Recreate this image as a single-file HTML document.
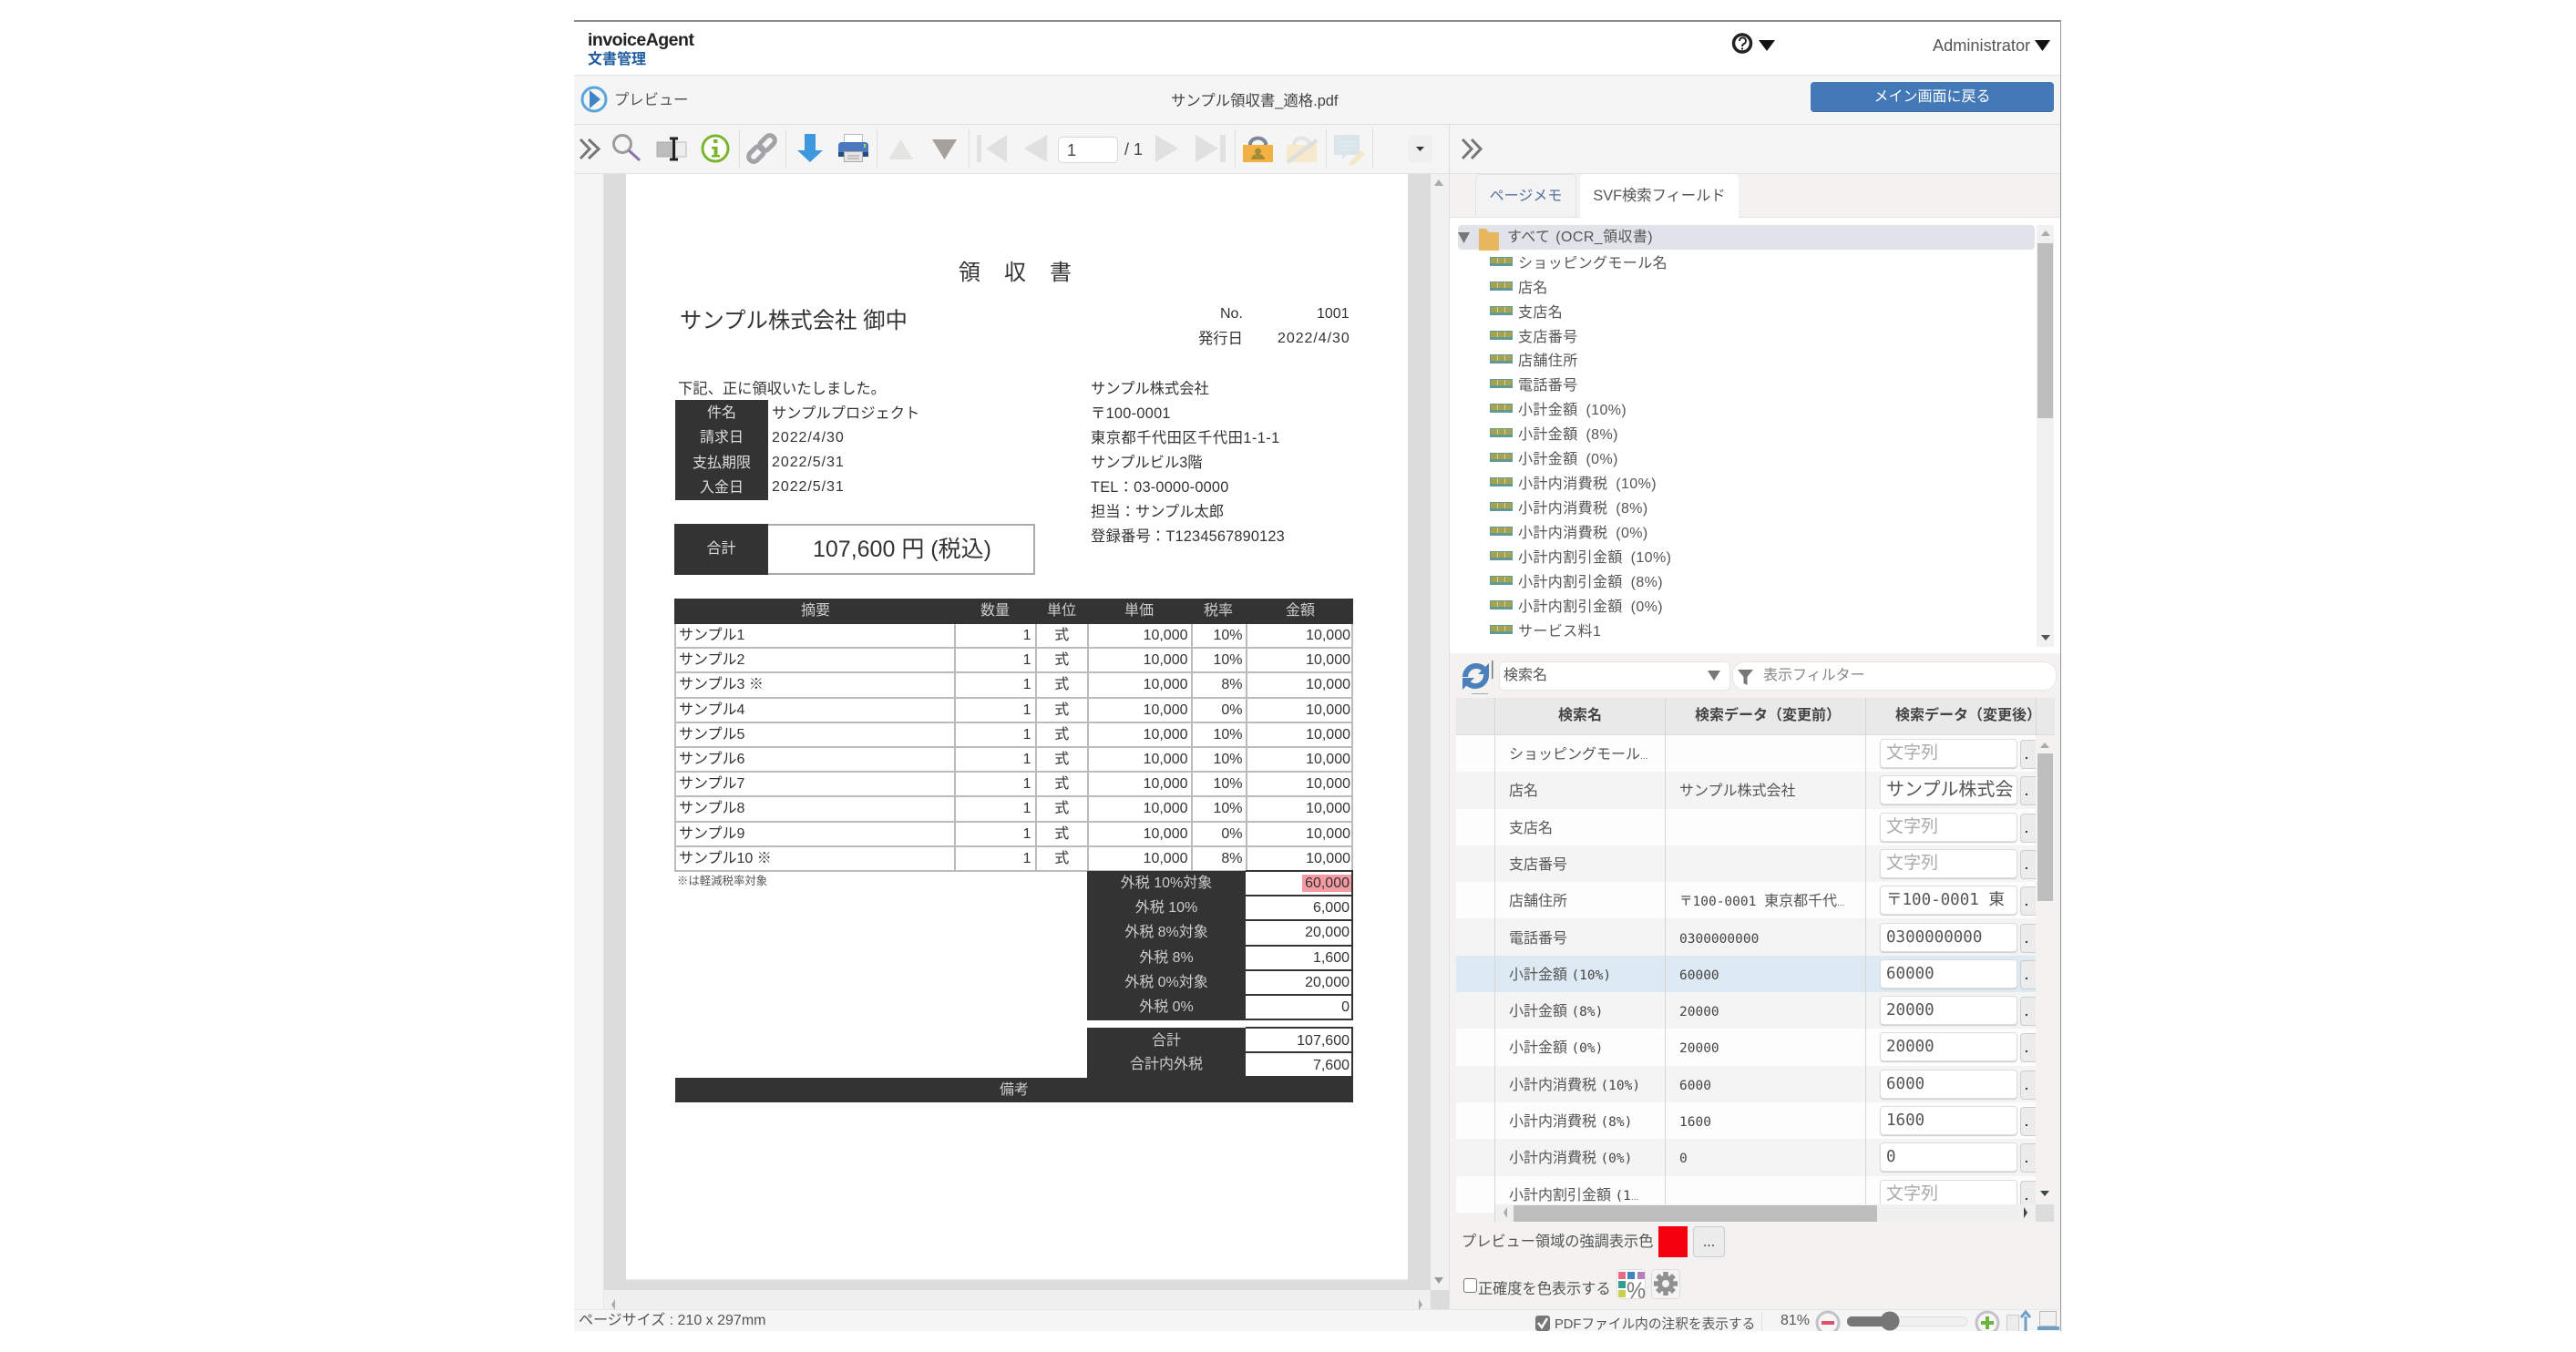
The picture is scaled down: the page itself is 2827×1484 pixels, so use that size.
<!DOCTYPE html>
<html lang="ja"><head><meta charset="utf-8"><title>プレビュー</title>
<style>
html,body{margin:0;padding:0;background:#fff}
body{width:2827px;height:1484px;position:relative;overflow:hidden;font-family:"Liberation Sans","Noto Sans CJK JP",sans-serif;font-size:16px;color:#555}
div,span.t{position:absolute;box-sizing:border-box}
.t{white-space:nowrap;line-height:20px}
.k{color:#333;font-size:16.3px;margin-top:1px}
.d{letter-spacing:.95px}
.r{left:740px;width:745px;height:27.2px;display:flex;border-left:2px solid #bbb;border-right:2px solid #bbb;border-bottom:2px solid #bbb;color:#333;line-height:25px}
.r span{display:block;flex:none;box-sizing:border-box;height:100%;border-right:2px solid #bbb;white-space:nowrap}
.r span:last-child{border-right:0}
.c1{width:307px;padding-left:3px}.c2{width:88.5px;text-align:right;padding-right:4px}.c3{width:57.5px;text-align:center}.c4{width:113.5px;text-align:right;padding-right:3px}.c5{width:60px;text-align:right;padding-right:3px}.c6{width:114.5px;text-align:right;padding-right:1px}
.hd{top:657px;height:27px;line-height:27px;color:#ccc;text-align:center;transform:translateX(-50%);white-space:nowrap}
.lb{color:#ccc;text-align:center;left:1193px;width:174px;height:27px;line-height:27px;white-space:nowrap}
.vl{left:1367px;width:118px;height:27.2px;background:#fff;border-bottom:2px solid #333;border-right:2px solid #333;text-align:right;padding-right:2px;line-height:25px;color:#333}
.dk{background:#333}
.wl{color:#ddd;text-align:center;left:741px;width:102px;height:27px;line-height:27px;margin-top:1px}
.tr{left:1634px;height:27px;line-height:27px;white-space:nowrap;padding-left:32px;color:#555;letter-spacing:.4px;word-spacing:4px}
.tr:before{content:"";position:absolute;left:1px;top:6px;width:25px;height:10px;background:repeating-linear-gradient(90deg,#a7a24f 0 7px,#d5d19a 7px 8px);border:1.5px solid #5f9a96;border-bottom:3px solid #5f9a96;box-sizing:border-box}
.tx{margin-top:2px}
.row{left:0;width:636px;height:40.3px}
.row .n{position:absolute;left:58px;top:2px;line-height:40px;white-space:nowrap}
.row .b{position:absolute;left:245px;top:2px;line-height:40px;white-space:nowrap}
.row i{font:normal 14.5px "DejaVu Sans Mono",monospace;color:#444}
.row .in{position:absolute;left:465px;top:4px;width:151px;height:32px;background:#fff;border:1px solid #ddd;border-radius:4px;box-shadow:0 1px 1px #ccc;font:17.5px/30px "DejaVu Sans Mono","Noto Sans CJK JP",monospace;padding-left:6px;overflow:hidden;white-space:nowrap;color:#555}
.row .ph{font:19px/30px "Liberation Sans","Noto Sans CJK JP",sans-serif;color:#aaa}
.row .jp{font:20px/30px "Liberation Sans","Noto Sans CJK JP",sans-serif}
.row .bt{position:absolute;left:619px;top:5px;width:24px;height:32px;background:#ececec;border:1px solid #ccc;border-radius:4px;font:bold 14px/30px "Liberation Sans",sans-serif;padding-left:4px;color:#333}
.el{font-size:10px}
</style></head><body>

<!-- frame -->
<div style="left:630px;top:22px;width:1632px;height:2px;background:#8a8a8a"></div>
<div style="left:2261px;top:22px;width:1px;height:1439px;background:#999"></div>
<div style="left:630px;top:24px;width:1631px;height:58px;background:#fff"></div>
<div style="left:630px;top:82px;width:1631px;height:55px;background:#f5f5f5;border-top:1px solid #e6e6e6;border-bottom:1px solid #dedede"></div>
<div style="left:630px;top:137px;width:1631px;height:54px;background:#f5f5f5;border-bottom:1px solid #e2e2e2"></div>
<div style="left:630px;top:191px;width:32px;height:1246px;background:#f5f5f5"></div>
<div style="left:662px;top:191px;width:1px;height:1246px;background:#e6e6e6"></div>
<div style="left:663px;top:191px;width:907px;height:1225px;background:#dcdcdc"></div>
<div style="left:687px;top:191px;width:858px;height:1214px;background:#fff;border-bottom:1px solid #eee"></div>
<div style="left:1570px;top:191px;width:20px;height:1225px;background:#f1f1f1"></div>
<div style="left:663px;top:1416px;width:907px;height:21px;background:#f0f0f0"></div>
<div style="left:1570px;top:1416px;width:20px;height:21px;background:#dcdcdc"></div>
<div style="left:630px;top:1437px;width:1631px;height:24px;background:#f5f5f5;border-top:1px solid #e6e6e6"></div>
<div style="left:1590px;top:137px;width:1px;height:1300px;background:#e0e0e0"></div>

<!-- header text -->
<span class="t" style="left:645px;top:34px;font-size:19.500px;font-weight:bold;color:#222;letter-spacing:-.5px">invoiceAgent</span>
<span class="t" style="left:645px;top:56px;font-size:16px;font-weight:bold;color:#1f5c9e">文書管理</span>
<span class="t" style="left:2121px;top:40px;font-size:18.200px">Administrator</span>
<span class="t" style="left:674px;top:100px;font-size:16.300px">プレビュー</span>
<span class="t" style="left:1285px;top:101px;color:#444;font-size:16.400px">サンプル領収書_適格.pdf</span>
<div style="left:1987px;top:90px;width:267px;height:33px;background:#4279b6;border-radius:4px;color:#fff;text-align:center;line-height:34px;border-bottom:1px solid #3a6ca5">メイン画面に戻る</div>
<div style="left:1161px;top:150px;width:66px;height:29px;background:#fff;border:1px solid #d8d8d8;border-radius:5px;line-height:28px;padding-left:9px;color:#444;font-size:18px">1</div>
<span class="t" style="left:1234px;top:154px;color:#444;font-size:18px">/ 1</span>
<div style="left:1545px;top:148px;width:27px;height:31px;background:#f0f0f0;border-radius:4px"></div>

<!-- invoice -->
<span class="t k" style="left:1052px;top:288px;font-size:24px;letter-spacing:26px;line-height:24px;margin-top:0">領収書</span>
<span class="t k" style="left:746px;top:338px;font-size:24.400px;line-height:28px">サンプル株式会社 御中</span>
<span class="t k" style="left:1339px;top:334px;font-size:16px">No.</span>
<span class="t k" style="left:1445px;top:334px;font-size:16px">1001</span>
<span class="t k" style="left:1315px;top:361px">発行日</span>
<span class="t k d" style="left:1402px;top:361px;font-size:16px">2022/4/30</span>
<span class="t k" style="left:744px;top:416px">下記、正に領収いたしました。</span>
<div class="dk" style="left:741px;top:439px;width:102px;height:110px"></div>
<div class="wl" style="top:439px">件名</div><div class="wl" style="top:466px">請求日</div><div class="wl" style="top:494px">支払期限</div><div class="wl" style="top:521px">入金日</div>
<span class="t k" style="left:847px;top:443px">サンプルプロジェクト</span>
<span class="t k d" style="left:847px;top:470px;font-size:16px">2022/4/30</span>
<span class="t k d" style="left:847px;top:497px;font-size:16px">2022/5/31</span>
<span class="t k d" style="left:847px;top:524px;font-size:16px">2022/5/31</span>
<span class="t k" style="left:1197px;top:416px">サンプル株式会社</span>
<span class="t k" style="left:1197px;top:443px;letter-spacing:.3px">〒100-0001</span>
<span class="t k" style="left:1197px;top:470px;letter-spacing:.45px">東京都千代田区千代田1-1-1</span>
<span class="t k" style="left:1197px;top:497px">サンプルビル3階</span>
<span class="t k" style="left:1197px;top:524px;letter-spacing:.25px">TEL：03-0000-0000</span>
<span class="t k" style="left:1197px;top:551px">担当：サンプル太郎</span>
<span class="t k" style="left:1197px;top:578px;letter-spacing:.2px">登録番号：T1234567890123</span>
<div style="left:740px;top:575px;width:396px;height:56px;border:2px solid #aaa;background:#fff"></div>
<div class="dk" style="left:740px;top:575px;width:103px;height:56px;line-height:56px;text-align:center;color:#ddd">合計</div>
<span class="t k" style="left:892px;top:588px;font-size:25px;line-height:30px;margin-top:0">107,600 円 (税込)</span>

<div class="dk" style="left:740px;top:657px;width:745px;height:28px"></div>
<div class="hd" style="left:895px">摘要</div><div class="hd" style="left:1092px">数量</div><div class="hd" style="left:1165px">単位</div><div class="hd" style="left:1250px">単価</div><div class="hd" style="left:1337px">税率</div><div class="hd" style="left:1427px">金額</div>

<div class="r" style="top:685px"><span class="c1">サンプル1</span><span class="c2">1</span><span class="c3">式</span><span class="c4">10,000</span><span class="c5">10%</span><span class="c6">10,000</span></div>
<div class="r" style="top:712.2px"><span class="c1">サンプル2</span><span class="c2">1</span><span class="c3">式</span><span class="c4">10,000</span><span class="c5">10%</span><span class="c6">10,000</span></div>
<div class="r" style="top:739.4px"><span class="c1">サンプル3 ※</span><span class="c2">1</span><span class="c3">式</span><span class="c4">10,000</span><span class="c5">8%</span><span class="c6">10,000</span></div>
<div class="r" style="top:766.6px"><span class="c1">サンプル4</span><span class="c2">1</span><span class="c3">式</span><span class="c4">10,000</span><span class="c5">0%</span><span class="c6">10,000</span></div>
<div class="r" style="top:793.8px"><span class="c1">サンプル5</span><span class="c2">1</span><span class="c3">式</span><span class="c4">10,000</span><span class="c5">10%</span><span class="c6">10,000</span></div>
<div class="r" style="top:821px"><span class="c1">サンプル6</span><span class="c2">1</span><span class="c3">式</span><span class="c4">10,000</span><span class="c5">10%</span><span class="c6">10,000</span></div>
<div class="r" style="top:848.2px"><span class="c1">サンプル7</span><span class="c2">1</span><span class="c3">式</span><span class="c4">10,000</span><span class="c5">10%</span><span class="c6">10,000</span></div>
<div class="r" style="top:875.4px"><span class="c1">サンプル8</span><span class="c2">1</span><span class="c3">式</span><span class="c4">10,000</span><span class="c5">10%</span><span class="c6">10,000</span></div>
<div class="r" style="top:902.6px"><span class="c1">サンプル9</span><span class="c2">1</span><span class="c3">式</span><span class="c4">10,000</span><span class="c5">0%</span><span class="c6">10,000</span></div>
<div class="r" style="top:929.8px"><span class="c1">サンプル10 ※</span><span class="c2">1</span><span class="c3">式</span><span class="c4">10,000</span><span class="c5">8%</span><span class="c6">10,000</span></div>
<span class="t" style="left:743px;top:957px;font-size:12.4px;color:#555">※は軽減税率対象</span>

<div class="dk" style="left:1193px;top:956px;width:174px;height:164px"></div>
<div class="lb" style="top:956px">外税 10%対象</div><div class="lb" style="top:983px">外税 10%</div><div class="lb" style="top:1010px">外税 8%対象</div><div class="lb" style="top:1038px">外税 8%</div><div class="lb" style="top:1065px">外税 0%対象</div><div class="lb" style="top:1092px">外税 0%</div>
<div style="left:1367px;top:955px;width:118px;height:2px;background:#333"></div>
<div style="left:1429px;top:960px;width:55px;height:19px;background:#f59aa3"></div>
<div class="vl" style="top:957px;background:transparent">60,000</div>
<div class="vl" style="top:984.2px">6,000</div><div class="vl" style="top:1011.4px">20,000</div><div class="vl" style="top:1038.6px">1,600</div><div class="vl" style="top:1065.8px">20,000</div><div class="vl" style="top:1093px">0</div>

<div class="dk" style="left:1193px;top:1128px;width:174px;height:56px"></div>
<div class="lb" style="top:1129px">合計</div><div class="lb" style="top:1155px">合計内外税</div>
<div style="left:1367px;top:1127px;width:118px;height:2px;background:#333"></div>
<div class="vl" style="top:1129px;height:27px;line-height:27px">107,600</div><div class="vl" style="top:1156px;height:27px;line-height:27px">7,600</div>
<div class="dk" style="left:741px;top:1183px;width:744px;height:27px;text-align:center;line-height:27px;color:#ccc">備考</div>

<!-- right panel -->
<div style="left:1591px;top:191px;width:670px;height:48px;background:#f3f2f1"></div>
<div style="left:1619px;top:191px;width:111px;height:48px;background:#f3f3f3;border:1px solid #e2e2e2;border-bottom:0;border-radius:5px 5px 0 0;line-height:48px;text-align:center;color:#56709e">ページメモ</div>
<div style="left:1734px;top:191px;width:174px;height:49px;background:#fff;border-radius:5px 5px 0 0;line-height:48px;text-align:center;font-size:16.300px">SVF検索フィールド</div>
<div style="left:1591px;top:239px;width:670px;height:478px;background:#fff"></div>
<div style="left:1591px;top:238px;width:143px;height:1px;background:#e3e3e3"></div>
<div style="left:1908px;top:238px;width:353px;height:1px;background:#e3e3e3"></div>
<div style="left:1600px;top:247px;width:633px;height:27px;background:#e0e4ea;border-radius:4px"></div>
<span class="t" style="left:1654px;top:251px;letter-spacing:.4px;word-spacing:1px">すべて (OCR_領収書)</span>
<div class="tr tx" style="top:274px">ショッピングモール名</div>
<div class="tr tx" style="top:301px">店名</div>
<div class="tr tx" style="top:328px">支店名</div>
<div class="tr tx" style="top:355px">支店番号</div>
<div class="tr tx" style="top:381px">店舗住所</div>
<div class="tr tx" style="top:408px">電話番号</div>
<div class="tr tx" style="top:435px">小計金額 (10%)</div>
<div class="tr tx" style="top:462px">小計金額 (8%)</div>
<div class="tr tx" style="top:489px">小計金額 (0%)</div>
<div class="tr tx" style="top:516px">小計内消費税 (10%)</div>
<div class="tr tx" style="top:543px">小計内消費税 (8%)</div>
<div class="tr tx" style="top:570px">小計内消費税 (0%)</div>
<div class="tr tx" style="top:597px">小計内割引金額 (10%)</div>
<div class="tr tx" style="top:624px">小計内割引金額 (8%)</div>
<div class="tr tx" style="top:651px">小計内割引金額 (0%)</div>
<div class="tr tx" style="top:678px">サービス料1</div>
<div style="left:2235px;top:247px;width:19px;height:463px;background:#f1f1f1"></div>
<div style="left:2236px;top:267px;width:17px;height:192px;background:#bebebe"></div>

<div style="left:1591px;top:717px;width:670px;height:720px;background:#f3f2f1"></div>
<div style="left:1645px;top:726px;width:254px;height:32px;background:#fff;border:1px solid #e6e6e6;border-radius:6px;line-height:29px;padding-left:4px">検索名</div>
<div style="left:1901px;top:726px;width:356px;height:32px;background:#fff;border:1px solid #e6e6e6;border-radius:14px;line-height:29px;padding-left:33px;color:#888">表示フィルター</div>

<div style="left:1598px;top:766px;width:657px;height:41px;background:#e9e9e9;border-bottom:1px solid #ddd"></div>
<span class="t" style="left:1710px;top:776px;font-weight:bold;color:#444">検索名</span>
<span class="t" style="left:1860px;top:776px;font-weight:bold;color:#444;font-size:16px">検索データ（変更前）</span>
<span class="t" style="left:2080px;top:776px;font-weight:bold;color:#444;font-size:16px">検索データ（変更後）</span>

<div style="left:1598px;top:807px;width:636px;height:524px;overflow:hidden">
<div class="row" style="top:0;background:#fdfdfd"><span class="n">ショッピングモール<span class="el">...</span></span><div class="in ph">文字列</div><div class="bt">.</div></div>
<div class="row" style="top:40.3px;background:#f4f4f4"><span class="n">店名</span><span class="b">サンプル株式会社</span><div class="in jp">サンプル株式会</div><div class="bt">.</div></div>
<div class="row" style="top:80.6px;background:#fdfdfd"><span class="n">支店名</span><div class="in ph">文字列</div><div class="bt">.</div></div>
<div class="row" style="top:120.9px;background:#f4f4f4"><span class="n">支店番号</span><div class="in ph">文字列</div><div class="bt">.</div></div>
<div class="row" style="top:161.2px;background:#fdfdfd"><span class="n">店舗住所</span><span class="b"><i>〒100-0001 </i>東京都千代<span class="el">...</span></span><div class="in">〒100-0001 東</div><div class="bt">.</div></div>
<div class="row" style="top:201.5px;background:#f4f4f4"><span class="n">電話番号</span><span class="b"><i>0300000000</i></span><div class="in">0300000000</div><div class="bt">.</div></div>
<div class="row" style="top:241.8px;background:#deeaf3"><span class="n">小計金額 <i>(10%)</i></span><span class="b"><i>60000</i></span><div class="in">60000</div><div class="bt">.</div></div>
<div class="row" style="top:282.1px;background:#f4f4f4"><span class="n">小計金額 <i>(8%)</i></span><span class="b"><i>20000</i></span><div class="in">20000</div><div class="bt">.</div></div>
<div class="row" style="top:322.4px;background:#fdfdfd"><span class="n">小計金額 <i>(0%)</i></span><span class="b"><i>20000</i></span><div class="in">20000</div><div class="bt">.</div></div>
<div class="row" style="top:362.7px;background:#f4f4f4"><span class="n">小計内消費税 <i>(10%)</i></span><span class="b"><i>6000</i></span><div class="in">6000</div><div class="bt">.</div></div>
<div class="row" style="top:403px;background:#fdfdfd"><span class="n">小計内消費税 <i>(8%)</i></span><span class="b"><i>1600</i></span><div class="in">1600</div><div class="bt">.</div></div>
<div class="row" style="top:443.3px;background:#f4f4f4"><span class="n">小計内消費税 <i>(0%)</i></span><span class="b"><i>0</i></span><div class="in">0</div><div class="bt">.</div></div>
<div class="row" style="top:483.6px;background:#fdfdfd"><span class="n">小計内割引金額 <i>(1</i><span class="el">...</span></span><div class="in ph">文字列</div><div class="bt">.</div></div>
</div>
<div style="left:1640px;top:766px;width:1px;height:575px;background:#d6d6d6"></div>
<div style="left:1827px;top:766px;width:1px;height:556px;background:#d6d6d6"></div>
<div style="left:2047px;top:766px;width:1px;height:556px;background:#d6d6d6"></div>
<div style="left:2234px;top:766px;width:1px;height:41px;background:#d6d6d6"></div>
<div style="left:2236px;top:827px;width:17px;height:162px;background:#bebebe"></div>
<div style="left:1641px;top:1322px;width:593px;height:19px;background:#f0f0f0"></div>
<div style="left:1661px;top:1323px;width:399px;height:18px;background:#bebebe"></div>
<div style="left:2234px;top:1322px;width:20px;height:19px;background:#dcdcdc"></div>

<span class="t" style="left:1604px;top:1353px;font-size:16.200px">プレビュー領域の強調表示色</span>
<div style="left:1820px;top:1346px;width:32px;height:34px;background:#f5000f"></div>
<div style="left:1858px;top:1346px;width:35px;height:34px;background:#ececec;border:1px solid #ccc;border-radius:4px;text-align:center;line-height:34px;color:#333">...</div>
<div style="left:1606px;top:1403px;width:15px;height:16px;background:#fff;border:1.5px solid #777;border-radius:3px"></div>
<span class="t" style="left:1622px;top:1405px;font-size:16.200px">正確度を色表示する</span>
<span class="t" style="left:635px;top:1440px;color:#555">ページサイズ : 210 x 297mm</span>
<span class="t" style="left:1706px;top:1444px;font-size:14.700px">PDFファイル内の注釈を表示する</span>
<span class="t" style="left:1954px;top:1440px;font-size:16px">81%</span>
<div style="left:1933px;top:1441px;width:1px;height:20px;background:#e0e0e0"></div>

<!-- icons -->
<svg width="2827" height="1484" viewBox="0 0 2827 1484" style="position:absolute;left:0;top:0">
<!-- help + carets -->
<circle cx="1912" cy="47.500" r="9.500" fill="#fff" stroke="#222" stroke-width="3.500"/>
<path d="M1909 45a3.500 3.500 0 1 1 5 3q-2 1-2 3M1912 52.500v2" fill="none" stroke="#222" stroke-width="2"/>
<path d="M1930 44h18l-9 12zM2233 44h17l-8.500 12z" fill="#111"/>
<!-- preview play -->
<circle cx="652" cy="109" r="13" fill="#f5f5f5" stroke="#5aa5dc" stroke-width="3"/>
<path d="M647 99l12 10-12 10z" fill="#3e84c6"/>
<!-- expand -->
<path d="M637 153l10 10.500-10 10.500M646 153l11 10.500-11 10.500" fill="none" stroke="#777" stroke-width="3"/>
<path d="M1605 153l10 10.500-10 10.500M1615 153l10 10.500-10 10.500" fill="none" stroke="#777" stroke-width="3"/>
<!-- magnifier -->
<circle cx="683" cy="158" r="9.500" fill="none" stroke="#9b9b9b" stroke-width="3"/>
<path d="M690 165l12 11" stroke="#8b72a8" stroke-width="3"/>
<!-- fit text -->
<rect x="721" y="156" width="16" height="16" fill="#bcbcbc" stroke="#aaa"/>
<rect x="741" y="156" width="12" height="16" fill="#eee" stroke="#bbb"/>
<path d="M735 152h9M739.500 152v23M735 175h9" stroke="#222" stroke-width="3" fill="none"/>
<!-- info -->
<circle cx="785" cy="163" r="14" fill="#fff" stroke="#7ab52e" stroke-width="3"/>
<rect x="783" y="153" width="4.500" height="4" fill="#7ab52e"/><path d="M781 161h6.500v9h2.500v2.500h-9V170h2.500v-6.500H781z" fill="#7ab52e"/>
<!-- link -->
<g transform="translate(836 163) rotate(-45)" fill="none" stroke="#a2a3a8" stroke-width="5"><rect x="-18" y="-5.500" width="19" height="11" rx="5.500"/><rect x="-1" y="-5.500" width="19" height="11" rx="5.500"/></g>
<!-- separators -->
<g stroke="#e0e0e0"><path d="M811.500 142v42M862.500 142v42M962.500 142v42M1063.500 142v42M1355.500 142v42M1455.500 142v42M1506.500 142v42"/></g>
<!-- download -->
<path d="M883 147h12v18h8l-14 13-14-13h8z" fill="#3f98de"/>
<!-- printer -->
<rect x="926.500" y="147.500" width="20" height="10" fill="#fff" stroke="#bbb"/>
<path d="M920 160q0-4 4-4h25q4 0 4 4v12h-33z" fill="#4a79c0"/><rect x="920" y="167" width="33" height="5" fill="#274a80"/>
<rect x="948" y="158" width="2" height="4" fill="#9fdc60"/>
<rect x="926.500" y="166.500" width="20" height="11" fill="#e6e6e6" stroke="#aaa"/><path d="M930 171h13M930 174h13" stroke="#999"/>
<!-- nav -->
<path d="M975 175l13.500-22 13.500 22z" fill="#e4e4e2"/>
<path d="M1023 153h27l-13.500 22z" fill="#a5a09c"/>
<rect x="1072" y="148" width="5" height="30" fill="#e2e2e2"/><path d="M1105 148v30l-23-15z" fill="#e0e0e0"/>
<path d="M1149 148v30l-25-15z" fill="#e0e0e0"/>
<path d="M1268 148v30l25-15z" fill="#e0e0e0"/>
<path d="M1312 148v30l25-15z" fill="#e0e0e0"/><rect x="1339" y="148" width="6" height="30" fill="#e2e2e2"/>
<!-- lock -->
<path d="M1372 159v-2a9 8 0 0 1 17 0v2" fill="none" stroke="#7d8798" stroke-width="4"/>
<rect x="1364" y="159" width="33" height="19" fill="#f2b243"/>
<circle cx="1380.500" cy="166" r="3.500" fill="#a88a35"/><path d="M1373 175q1-6 7.500-6t7.500 6z" fill="#a88a35"/>
<path d="M1420 159v-2a9 8 0 0 1 17 0v2" fill="none" stroke="#e2e4e8" stroke-width="4"/><rect x="1412" y="159" width="33" height="19" fill="#f7e9cc"/>
<path d="M1413 178l32-24" stroke="#dedede" stroke-width="4.500"/>
<!-- comment -->
<path d="M1466 148h24q2 0 2 2v18q0 2-2 2h-12l-5 5v-5h-7q-2 0-2-2v-18q0-2 2-2z" fill="#dbe5ec"/>
<path d="M1469 156h18M1469 160h18M1469 164h12" stroke="#eaf0f4"/>
<path d="M1482 177l12-12 4 4-12 12-6 1z" fill="#f4e8cc"/>
<path d="M1554 161h9l-4.500 5z" fill="#333"/>
<!-- scroll arrows -->
<path d="M1574 204l5-7 5 7z" fill="#aaa"/><path d="M1574 1402l5 7 5-7z" fill="#999"/>
<path d="M675 1426l-4 6 4 6zM1557 1426l4 6-4 6z" fill="#aaa"/>
<path d="M2240 259l5-6 5 6z" fill="#aaa"/><path d="M2240 697l5 6 5-6z" fill="#555"/>
<path d="M2239 821l5-6 5 6z" fill="#aaa"/><path d="M2239 1307l5 6 5-6z" fill="#444"/>
<path d="M1654 1325l-4 6 4 6z" fill="#aaa"/><path d="M2221 1325l4 6-4 6z" fill="#444"/>
<!-- tree folder -->
<path d="M1600 255h13l-6.500 12z" fill="#777"/>
<path d="M1623 251h8l3 4h11v20h-22z" fill="#e8b65c"/>
<!-- refresh -->
<g fill="none" stroke="#4c80bd" stroke-width="6"><path d="M1608 743a12 12 0 0 1 20-9"/><path d="M1631 740a12 12 0 0 1-20 10"/></g>
<path d="M1634 728v12h-12zM1605 757v-13h13z" fill="#4c80bd"/>
<rect x="1637" y="725" width="1.500" height="20" fill="#777"/>
<rect x="1615" y="761" width="18" height="1" fill="#aaa"/>
<path d="M1874 736h14l-7 11z" fill="#777"/>
<path d="M1907 735h17l-6.500 8v9l-4-2v-7z" fill="#777"/>
<!-- percent icon -->
<rect x="1774.500" y="1393.500" width="31" height="32" rx="4" fill="#fff" stroke="#ddd"/>
<rect x="1776" y="1396" width="8" height="8" fill="#e86a85"/><rect x="1786" y="1396" width="8" height="8" fill="#3f85c6"/><rect x="1797" y="1396" width="8" height="8" fill="#b680bd"/>
<rect x="1776" y="1406" width="8" height="8" fill="#2f9f93"/><rect x="1776" y="1416" width="8" height="8" fill="#c8d14e"/>
<text x="1785" y="1425" font-family="Liberation Sans" font-size="25" fill="#777" textLength="21" lengthAdjust="spacingAndGlyphs">%</text>
<!-- gear -->
<rect x="1812.500" y="1393.500" width="31" height="32" rx="4" fill="#f4f4f4" stroke="#ddd"/>
<g transform="translate(1828 1409)"><circle r="6.500" fill="none" stroke="#909090" stroke-width="5"/><g stroke="#909090" stroke-width="5.500"><path d="M0-13v5M0 8v5M-13 0h5M8 0h5M-9-9l4 4M5 5l4 4M9-9l-4 4M-5 5l-4 4"/></g></g>
<!-- status icons -->
<rect x="1685" y="1444" width="16" height="17" rx="3" fill="#777"/>
<path d="M1688 1452l4 5 6-10" fill="none" stroke="#fff" stroke-width="2.500"/>
<clipPath id="cl"><rect x="1980" y="1430" width="290" height="31"/></clipPath>
<g clip-path="url(#cl)">
<circle cx="2006" cy="1452" r="12" fill="#f5f5f5" stroke="#c2c2c8" stroke-width="3"/><rect x="1999" y="1450" width="14" height="4" fill="#e0526c"/>
<rect x="2027.500" y="1445.500" width="131" height="10" rx="5" fill="#f0f0f0" stroke="#ddd"/>
<rect x="2027" y="1445" width="45" height="11" rx="5" fill="#777"/>
<ellipse cx="2074" cy="1450" rx="10.500" ry="10.500" fill="#777"/>
<circle cx="2181" cy="1452" r="12" fill="#f5f5f5" stroke="#c2c2c8" stroke-width="3"/><path d="M2181 1445v14M2174 1452h14" stroke="#6db33f" stroke-width="4"/>
<rect x="2202.500" y="1443.500" width="13" height="20" fill="#ececec" stroke="#ccc"/>
<path d="M2223 1461v-16M2218 1446l5-6 5 6" fill="none" stroke="#6f9fc4" stroke-width="3"/>
<rect x="2238.500" y="1439.500" width="18" height="16" fill="#f1f1f1" stroke="#bbb"/>
<path d="M2236 1458h24" stroke="#6f9fc4" stroke-width="4"/>
</g>
</svg>
</body></html>
